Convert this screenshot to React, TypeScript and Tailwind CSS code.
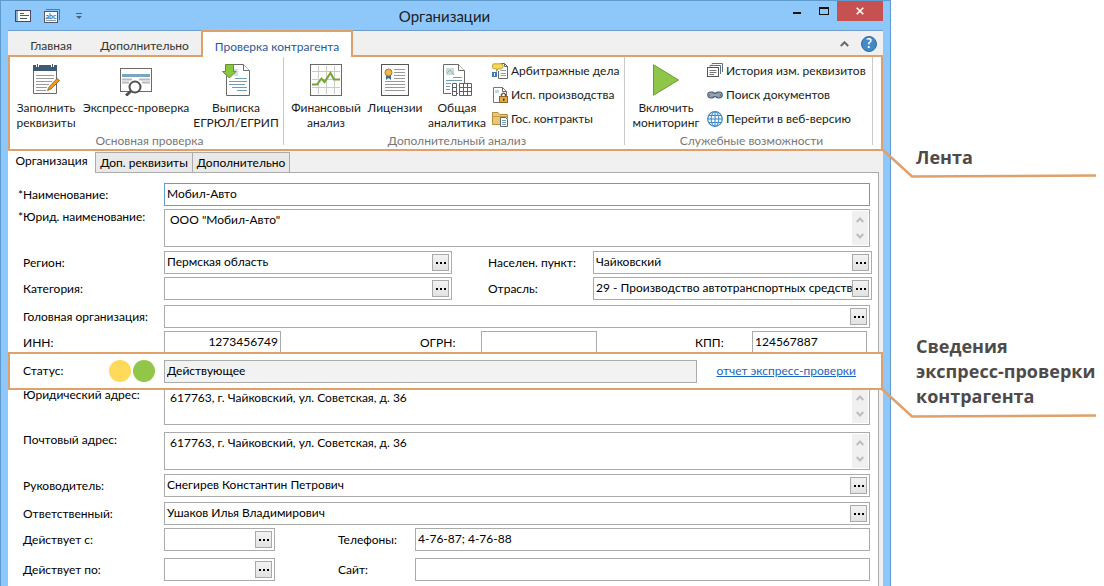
import type { ReactNode } from 'react';

const LINE = '#dea16b';

/* ---------- icons ---------- */

const NotepadIcon = () => (
  <svg width="32" height="32" viewBox="0 0 32 32" aria-hidden="true">
    <path d="M3.500 5V29.500H26.500V5" fill="#fff" stroke="#6a6a6a" />
    <path d="M3 1H27V7H3Z" fill="#3d5973" />
    <path d="M7.500 0V3M22.500 0V3" stroke="#fff" strokeWidth="3" />
    <path d="M7.500 0V3M22.500 0V3" stroke="#3d5973" />
    <path d="M6 11.500H24M6 14.500H24M6 17.500H22M6 20.500H19M6 23.500H17M6 26.500H16" stroke="#9a9a9a" />
    <path d="M17.500 26.500L19 23L27 14.500L29.500 16.500L21 25Z" fill="#f39a1e" stroke="#8a5a1c" strokeWidth=".8" />
  </svg>
);

const ExpressIcon = () => (
  <svg width="32" height="32" viewBox="0 0 32 32" aria-hidden="true">
    <rect x=".5" y="4.500" width="31" height="23" fill="#fff" stroke="#6a6a6a" />
    <rect x="2" y="10" width="28" height="3" fill="#7aa5bf" />
    <path d="M2 15.500H12M19 15.500H30M2 18.500H9M22 18.500H30" stroke="#b9b9b9" strokeWidth="2" />
    <circle cx="15" cy="23" r="5.500" fill="#fff" stroke="#505050" strokeWidth="2" />
    <path d="M11 27L6 31.500" stroke="#505050" strokeWidth="3" />
  </svg>
);

const ExtractIcon = () => (
  <svg width="32" height="32" viewBox="0 0 32 32" aria-hidden="true">
    <path d="M6.500 .5H23.500L29.500 6.500V31.500H6.500Z" fill="#fff" stroke="#6a6a6a" />
    <path d="M23.500 .5V6.500H29.500" fill="#fff" stroke="#6a6a6a" />
    <rect x="14" y="5" width="4" height="7" fill="#d0dfe8" />
    <path d="M15 14.500H27M9 17.500H27M9 20.500H25M12 23.500H27M17 26.500H27" stroke="#6f9cb8" />
    <path d="M5.500 .5H13.500V7.500H16L9.500 14L2.500 7.500H5.500Z" fill="#8bc63f" stroke="#5f9132" />
  </svg>
);

const FinanceIcon = () => (
  <svg width="32" height="32" viewBox="0 0 32 32" aria-hidden="true">
    <rect x=".5" y=".5" width="31" height="31" fill="#fdfdfd" stroke="#6a6a6a" />
    <path d="M8.500 2V30M16.500 2V30M24.500 2V30M2 7.500H30M2 15.500H30M2 23.500H30" stroke="#c8cacd" />
    <path d="M2 20.500H7L11.500 14.500L14.500 18L20.500 9L24 15.500H30" fill="none" stroke="#73a632" strokeWidth="2" />
  </svg>
);

const LicenseIcon = () => (
  <svg width="32" height="32" viewBox="0 0 32 32" aria-hidden="true">
    <rect x="2.500" y=".5" width="27" height="31" fill="#fdfdfd" stroke="#555" />
    <path d="M15 5.500H26M15 8.500H26M15 11.500H26M15 14.500H26M6 17.500H26M6 20.500H26M6 23.500H26M6 26.500H26" stroke="#999" />
    <path d="M7 10V16L9.500 14L12 16V10Z" fill="#3d6a9a" />
    <circle cx="9.500" cy="8.500" r="3.500" fill="#f1b84a" stroke="#a97a2c" />
  </svg>
);

const AnalyticsIcon = () => (
  <svg width="32" height="32" viewBox="0 0 32 32" aria-hidden="true">
    <path d="M2.500 .5H17.500L23.500 6.500V29.500H2.500Z" fill="#fff" stroke="#6a6a6a" />
    <path d="M17.500 .5V6.500H23.500" fill="#fff" stroke="#6a6a6a" />
    <rect x="5" y="4" width="8" height="7" fill="#c9dbd9" />
    <path d="M6 9L9 6L13 11" stroke="#8fb3b3" fill="none" />
    <path d="M12 13.500H21M5 16.500H21M5 19.500H10M5 22.500H9M5 25.500H9" stroke="#6f9cb8" />
    <path d="M10 19H16V32H10ZM17 19H31V32H17Z" fill="#fff" />
    <path d="M11.500 19.500H15.500V31.500H11.500ZM11.500 23.500H15.500M11.500 27.500H15.500M18.500 19.500H30.500V31.500H18.500ZM18.500 23.500H30.500M18.500 27.500H30.500M22.500 19.500V31.500M26.500 19.500V31.500" fill="none" stroke="#606060" />
  </svg>
);

const PlayIcon = () => (
  <svg width="32" height="32" viewBox="0 0 32 32" aria-hidden="true">
    <path d="M3.500 .8L28.500 16L3.500 31.200Z" fill="#8fc549" stroke="#699a34" />
  </svg>
);

const ArbitrationIcon = () => (
  <svg width="16" height="16" viewBox="0 0 16 16" aria-hidden="true">
    <path d="M8.500 .5H12.500L15.500 3.500V15.500H6.500V8" fill="#fff" stroke="#666" />
    <path d="M12.500 .5V3.500H15.500" fill="none" stroke="#666" />
    <path d="M8.500 7.500H14M8.500 10.500H14M8.500 12.500H14" stroke="#7fa6bd" />
    <path d="M1.500 .8H9.500L11 2V4.500L9.500 5.800H6L4.500 8.500V5.800H1.500L.5 4.500V2Z" fill="#f5dc4e" stroke="#a78d2e" strokeWidth=".8" />
    <rect x="0" y="9" width="5" height="5" fill="#3f7ab5" />
    <path d="M2.500 10V13" stroke="#fff" />
  </svg>
);

const LockDocIcon = () => (
  <svg width="16" height="16" viewBox="0 0 16 16" aria-hidden="true">
    <path d="M1.500 .5H10.500L14.500 4.500V15.500H1.500Z" fill="#fff" stroke="#777" />
    <path d="M10.500 .5V4.500H14.500" fill="none" stroke="#666" />
    <path d="M3 3H7V6H3Z" fill="#c5d7dd" />
    <path d="M9.500 10V7.500Q11.500 4.800 13.500 7.500V10" fill="none" stroke="#6a5330" strokeWidth="1.400" />
    <rect x="7.500" y="9.500" width="8" height="6" fill="#e8a94a" stroke="#8f6527" />
    <rect x="11" y="11.500" width="1.500" height="2.500" fill="#5c4216" />
  </svg>
);

const FolderIcon = () => (
  <svg width="16" height="16" viewBox="0 0 16 16" aria-hidden="true">
    <path d="M.5 1.500H6L7.500 3.500H15.500V13.500H.5Z" fill="#ecc76e" stroke="#b78f40" />
    <path d="M1 5.500H15" stroke="#c29b4a" />
    <path d="M8.500 6.500H13.500L15.500 8.500V15.500H8.500Z" fill="#fff" stroke="#666" />
    <path d="M10 9.500H14M10 11.500H14M10 13.500H14" stroke="#6f9cb8" />
  </svg>
);

const HistoryIcon = () => (
  <svg width="16" height="16" viewBox="0 0 16 16" aria-hidden="true">
    <path d="M5 1.500V.5H15.500V9M3 3.500V2.500H13.500V11" fill="none" stroke="#5c7286" />
    <rect x=".5" y="4.500" width="11" height="9" fill="#fff" stroke="#555" />
    <path d="M2.500 7.500H9.500M2.500 9.500H9.500M2.500 11.500H7" stroke="#777" />
  </svg>
);

const ChainIcon = () => (
  <svg width="16" height="16" viewBox="0 0 16 16" aria-hidden="true">
    <rect x=".8" y="5.200" width="6.900" height="5.600" rx="2.800" fill="#b9c4d2" stroke="#53647c" strokeWidth="1.300" />
    <rect x="8.300" y="5.200" width="6.900" height="5.600" rx="2.800" fill="#b9c4d2" stroke="#53647c" strokeWidth="1.300" />
    <path d="M3.500 8H12.500" stroke="#53647c" strokeWidth="3" strokeLinecap="round" />
    <path d="M3.500 8H12.500" stroke="#dfe5ec" strokeLinecap="round" />
  </svg>
);

const GlobeIcon = () => (
  <svg width="16" height="16" viewBox="0 0 16 16" aria-hidden="true">
    <circle cx="8" cy="8" r="7.300" fill="#f2f9ff" stroke="#3f87c5" strokeWidth="1.200" />
    <ellipse cx="8" cy="8" rx="3.800" ry="7.300" fill="none" stroke="#3f87c5" />
    <path d="M8 .7V15.300M.7 8H15.300M2 4.500H14M2 11.500H14" stroke="#3f87c5" />
  </svg>
);

/* ---------- ribbon ---------- */

function BigButton({ icon, lines, width }: { icon: ReactNode; lines: string[]; width: string }) {
  return (
    <button type="button" className={`flex shrink-0 flex-col items-center pt-[7px] ${width}`}>
      {icon}
      <span className="mt-1 flex flex-col items-center text-[12px] leading-[15px] whitespace-nowrap">
        {lines.map((l) => (
          <span key={l}>{l}</span>
        ))}
      </span>
    </button>
  );
}

function SmallButton({ icon, label }: { icon: ReactNode; label: string }) {
  return (
    <button type="button" className="flex h-4 items-center gap-[3px] text-[12px] leading-4 whitespace-nowrap">
      {icon}
      {label}
    </button>
  );
}

function RibbonGroup({ title, width, children }: { title: string; width: string; children: ReactNode }) {
  return (
    <section className={`flex h-[88px] shrink-0 flex-col border-r border-[#c8c8c8] pl-[6px] ${width}`}>
      <div className="flex h-[76px] shrink-0">{children}</div>
      <h2 className="text-center text-[12px] leading-4 text-[#777]">{title}</h2>
    </section>
  );
}

/* ---------- form ---------- */

function Label({ id, text, width = 'w-[141px]' }: { id: string; text: string; width?: string }) {
  return (
    <label htmlFor={id} className={`shrink-0 leading-4 whitespace-nowrap ${width}`}>
      {text.startsWith('*') ? <span className="-ml-[5px]">{text}</span> : text}
    </label>
  );
}

function Field({
  id,
  value = '',
  width = 'flex-1',
  picker = false,
  focused = false,
  right = false,
  readOnly = false,
}: {
  id: string;
  value?: string;
  width?: string;
  picker?: boolean;
  focused?: boolean;
  right?: boolean;
  readOnly?: boolean;
}) {
  return (
    <div
      className={`flex h-[23px] min-w-0 items-center border pr-[2px] ${width} ${
        focused ? 'border-[#5f9fcf]' : 'border-[#ababab]'
      } ${readOnly ? 'bg-[#f2f2f2]' : 'bg-white'}`}
    >
      <input
        id={id}
        defaultValue={value}
        readOnly={readOnly}
        className={`h-full w-full min-w-0 flex-1 bg-transparent pb-[2px] pl-[2px] outline-none ${right ? 'text-right' : ''}`}
      />
      {picker && (
        <button
          type="button"
          aria-label="Выбрать"
          className="flex size-[17px] shrink-0 items-center justify-center gap-[2px] border border-[#a9a9a9] bg-linear-to-b from-[#f3f3f3] to-[#e2e2e2]"
        >
          <i className="size-[2px] bg-black" />
          <i className="size-[2px] bg-black" />
          <i className="size-[2px] bg-black" />
        </button>
      )}
    </div>
  );
}

const Chevron = ({ d }: { d: string }) => (
  <svg width="8" height="6" viewBox="0 0 8 6" aria-hidden="true">
    <path d={d} fill="none" stroke="#bdbdbd" strokeWidth="2" />
  </svg>
);

function Area({ id, value }: { id: string; value: string }) {
  return (
    <div className="flex h-[38px] flex-1 border border-[#ababab] bg-white p-px">
      <textarea
        id={id}
        defaultValue={value}
        className="h-full flex-1 resize-none overflow-hidden pt-px pl-1 leading-4 outline-none"
      />
      <div className="flex w-4 flex-col items-center justify-between bg-[#f0f0f0] py-[6px]">
        <Chevron d="M.7 5L4 1.500L7.300 5" />
        <Chevron d="M.7 1L4 4.500L7.300 1" />
      </div>
    </div>
  );
}

const ROW = 'flex items-center pl-[15px] pr-[8px]';
const AREA_ROW = 'flex items-start pl-[15px] pr-[8px]';

function Callout({ lines, place }: { lines: string[]; place: string }) {
  return (
    <div className="relative h-10 w-full">
      <svg
        className="absolute -top-[9px] -left-[10px]"
        width="218"
        height="32"
        viewBox="0 0 218 32"
        aria-hidden="true"
      >
        <path d="M1 1L31 28.500L215 27.500" fill="none" stroke={LINE} strokeWidth="2.500" />
      </svg>
      <p className={`absolute left-[25px] text-[18px] leading-[25px] font-bold whitespace-nowrap text-[#4f4a4a] ${place}`}>
        {lines.map((l) => (
          <span key={l} className="block">
            {l}
          </span>
        ))}
      </p>
    </div>
  );
}

export default function App() {
  return (
    <div className="flex h-screen overflow-hidden bg-white font-['Lato','Open_Sans',sans-serif] text-[12px] text-[#1c1c1c]">
      <main className="flex min-w-0 flex-1 flex-col border border-b-0 border-[#5f9bcd] bg-[#8ec8fb] pr-[7px] pl-[7px]">
        {/* title bar */}
        <header className="flex h-[29px] shrink-0 items-start">
          <div className="flex h-[30px] items-center gap-[13px] pl-[7px]">
            <svg width="16" height="12" viewBox="0 0 16 12" aria-hidden="true">
              <rect x=".5" y=".5" width="15" height="11" fill="#fff" stroke="#446" />
              <path d="M1 1H3V11H1Z" fill="#7fb2d6" />
              <path d="M5 3.500H9M5 5.500H14M5 8.500H12" stroke="#4c5b66" />
            </svg>
            <svg width="16" height="14" viewBox="0 0 16 14" aria-hidden="true">
              <path d="M2 .5H15.500V11" fill="none" stroke="#4a7ba6" />
              <rect x=".5" y="2.500" width="13" height="11" fill="#fff" stroke="#556" />
              <text x="1.500" y="10" fontSize="7" fontWeight="bold" fill="#2f6aa5">abc</text>
              <path d="M2 11.500H12" stroke="#8a9aa8" />
            </svg>
            <svg className="ml-[3px]" width="6" height="6" viewBox="0 0 6 6" aria-hidden="true">
              <path d="M0 .5H6" stroke="#47627a" />
              <path d="M0 3H6L3 6Z" fill="#47627a" />
            </svg>
          </div>
          <h1 className="flex-1 pt-[5px] pl-6 text-center text-[15px] leading-5">Организации</h1>
          <div className="flex items-start">
            <button type="button" aria-label="Свернуть" className="flex h-5 w-[27px] items-center justify-center pt-1">
              <span className="h-[2px] w-2 bg-[#111]" />
            </button>
            <button type="button" aria-label="Развернуть" className="flex h-5 w-[27px] items-center justify-center">
              <span className="h-2 w-[10px] border border-t-2 border-[#111]" />
            </button>
            <button type="button" aria-label="Закрыть" className="flex h-5 w-[46px] items-center justify-center bg-[#c75050]">
              <svg width="8" height="8" viewBox="0 0 8 8" aria-hidden="true">
                <path d="M.7 .7L7.300 7.300M7.300 .7L.7 7.300" stroke="#fff" strokeWidth="1.600" />
              </svg>
            </button>
          </div>
        </header>

        <div className="flex min-h-0 flex-1 flex-col border-t border-[#6f9fc8] bg-[#f0f0f0]">
          {/* ribbon tabs */}
          <nav className="flex h-[25px] shrink-0 items-stretch text-[12px] text-[#333]">
            <button type="button" className="w-[86px] pt-1">Главная</button>
            <button type="button" className="w-[107px] pt-1 pr-[6px]">Дополнительно</button>
            <button
              type="button"
              className="relative z-10 -mt-px -mb-px w-[152px] border-2 border-b-0 border-[#dea16b] bg-white pt-1 text-[#2b579a]"
            >
              Проверка контрагента
            </button>
            <div className="ml-auto flex items-center gap-3 pr-[6px]">
              <svg width="9" height="6" viewBox="0 0 9 6" aria-hidden="true">
                <path d="M.8 5L4.500 1.300L8.200 5" fill="none" stroke="#666" strokeWidth="2" />
              </svg>
              <button type="button" aria-label="Справка" className="flex size-4 items-center justify-center rounded-full border border-[#2b6ca8] bg-[#4189c7] text-[13px] leading-none font-bold text-white">
                ?
              </button>
            </div>
          </nav>

          {/* ribbon */}
          <div className="-mt-px flex h-[96px] shrink-0 overflow-hidden border-2 border-[#dea16b] bg-white">
            <RibbonGroup title="Основная проверка" width="w-[274px]">
              <BigButton icon={<NotepadIcon />} lines={['Заполнить', 'реквизиты']} width="w-[60px]" />
              <BigButton icon={<ExpressIcon />} lines={['Экспресс-проверка']} width="w-[120px]" />
              <BigButton icon={<ExtractIcon />} lines={['Выписка', 'ЕГРЮЛ/ЕГРИП']} width="w-[80px]" />
            </RibbonGroup>
            <RibbonGroup title="Дополнительный анализ" width="w-[341px]">
              <BigButton icon={<FinanceIcon />} lines={['Финансовый', 'анализ']} width="w-[72px]" />
              <BigButton icon={<LicenseIcon />} lines={['Лицензии']} width="w-[66px]" />
              <BigButton icon={<AnalyticsIcon />} lines={['Общая', 'аналитика']} width="w-[58px]" />
              <div className="flex flex-col gap-2 pt-[6px] pl-[6px]">
                <SmallButton icon={<ArbitrationIcon />} label="Арбитражные дела" />
                <SmallButton icon={<LockDocIcon />} label="Исп. производства" />
                <SmallButton icon={<FolderIcon />} label="Гос. контракты" />
              </div>
            </RibbonGroup>
            <RibbonGroup title="Служебные возможности" width="w-[248px]">
              <BigButton icon={<PlayIcon />} lines={['Включить', 'мониторинг']} width="w-[70px]" />
              <div className="flex flex-col gap-2 pt-[6px] pl-[6px]">
                <SmallButton icon={<HistoryIcon />} label="История изм. реквизитов" />
                <SmallButton icon={<ChainIcon />} label="Поиск документов" />
                <SmallButton icon={<GlobeIcon />} label="Перейти в веб-версию" />
              </div>
            </RibbonGroup>
          </div>

          {/* form tabs */}
          <nav className="flex h-[21px] shrink-0 items-end text-[12px] text-black">
            <button type="button" className="relative z-10 -mb-px h-[22px] w-[87px] bg-white pb-[2px]">Организация</button>
            <button type="button" className="h-[20px] w-[98px] border border-b-0 border-[#ababab] bg-[#e9e9e9]">Доп. реквизиты</button>
            <button type="button" className="-ml-px h-[20px] w-[98px] border border-b-0 border-[#ababab] bg-[#e9e9e9]">Дополнительно</button>
          </nav>

          {/* form */}
          <form className="mr-1 flex min-h-0 flex-1 flex-col border-t border-r border-[#ababab] bg-white pt-[10px] text-black">
            <div className={ROW}>
              <Label id="name" text="*Наименование:" />
              <Field id="name" value="Мобил-Авто" focused />
            </div>
            <div className={`${AREA_ROW} mt-[3px]`}>
              <Label id="legal" text="*Юрид. наименование:" />
              <Area id="legal" value={'ООО "Мобил-Авто"'} />
            </div>
            <div className="mt-1 flex items-center pr-[6px] pl-[15px]">
              <Label id="region" text="Регион:" />
              <Field id="region" value="Пермская область" picker width="w-[288px]" />
              <span className="w-9" />
              <Label id="city" text="Населен. пункт:" width="w-[105px]" />
              <Field id="city" value="Чайковский" picker />
            </div>
            <div className="mt-[3px] flex items-center pr-[6px] pl-[15px]">
              <Label id="category" text="Категория:" />
              <Field id="category" picker width="w-[288px]" />
              <span className="w-9" />
              <Label id="industry" text="Отрасль:" width="w-[105px]" />
              <Field id="industry" value="29 - Производство автотранспортных средств" picker />
            </div>
            <div className={`${ROW} mt-[5px]`}>
              <Label id="parent" text="Головная организация:" />
              <Field id="parent" picker />
            </div>
            <div className="mt-[3px] flex items-center pr-[11px] pl-[15px]">
              <Label id="inn" text="ИНН:" />
              <Field id="inn" value="1273456749" right width="w-[117px]" />
              <span className="flex-[139]" />
              <Label id="ogrn" text="ОГРН:" width="w-[61px]" />
              <Field id="ogrn" width="w-[116px]" />
              <span className="flex-[98]" />
              <Label id="kpp" text="КПП:" width="w-[57px]" />
              <Field id="kpp" value="124567887" width="w-[115px]" />
            </div>

            <div className="relative z-10 -mt-[2px] -mr-[5px] flex h-[38px] shrink-0 items-center border-2 border-[#dea16b] bg-white pl-[13px]">
              <label htmlFor="status" className="w-[86px] leading-4">Статус:</label>
              <span className="mr-[2px] size-[22px] rounded-full bg-[#ffd95a]" />
              <span className="mr-[9px] size-[22px] rounded-full bg-[#92c648]" />
              <Field id="status" value="Действующее" readOnly />
              <a href="#report" className="mr-[25px] ml-[19px] leading-4 text-[#1b66c0] underline">
                отчет экспресс-проверки
              </a>
            </div>

            <div className={`${AREA_ROW} -mt-[3px]`}>
              <Label id="addr" text="Юридический адрес:" />
              <Area id="addr" value="617763, г. Чайковский, ул. Советская, д. 36" />
            </div>
            <div className={`${AREA_ROW} mt-[7px]`}>
              <Label id="post" text="Почтовый адрес:" />
              <Area id="post" value="617763, г. Чайковский, ул. Советская, д. 36" />
            </div>
            <div className={`${ROW} mt-1`}>
              <Label id="head" text="Руководитель:" />
              <Field id="head" value="Снегирев Константин Петрович" picker />
            </div>
            <div className={`${ROW} mt-[5px]`}>
              <Label id="resp" text="Ответственный:" />
              <Field id="resp" value="Ушаков Илья Владимирович" picker />
            </div>
            <div className={`${ROW} mt-[3px]`}>
              <Label id="from" text="Действует с:" />
              <Field id="from" picker width="w-[111px]" />
              <span className="w-[63px]" />
              <Label id="phones" text="Телефоны:" width="w-[77px]" />
              <Field id="phones" value="4-76-87; 4-76-88" />
            </div>
            <div className={`${ROW} mt-[7px]`}>
              <Label id="to" text="Действует по:" />
              <Field id="to" picker width="w-[111px]" />
              <span className="w-[63px]" />
              <Label id="site" text="Сайт:" width="w-[77px]" />
              <Field id="site" />
            </div>
          </form>
        </div>
      </main>

      {/* callouts */}
      <aside className="relative z-20 flex w-[213px] shrink-0 flex-col gap-[200px] pt-[157px] font-['Open_Sans','Noto_Sans',sans-serif]">
        <Callout lines={['Лента']} place="-top-3" />
        <Callout lines={['Сведения', 'экспресс-проверки', 'контрагента']} place="-top-[63px]" />
      </aside>
    </div>
  );
}
